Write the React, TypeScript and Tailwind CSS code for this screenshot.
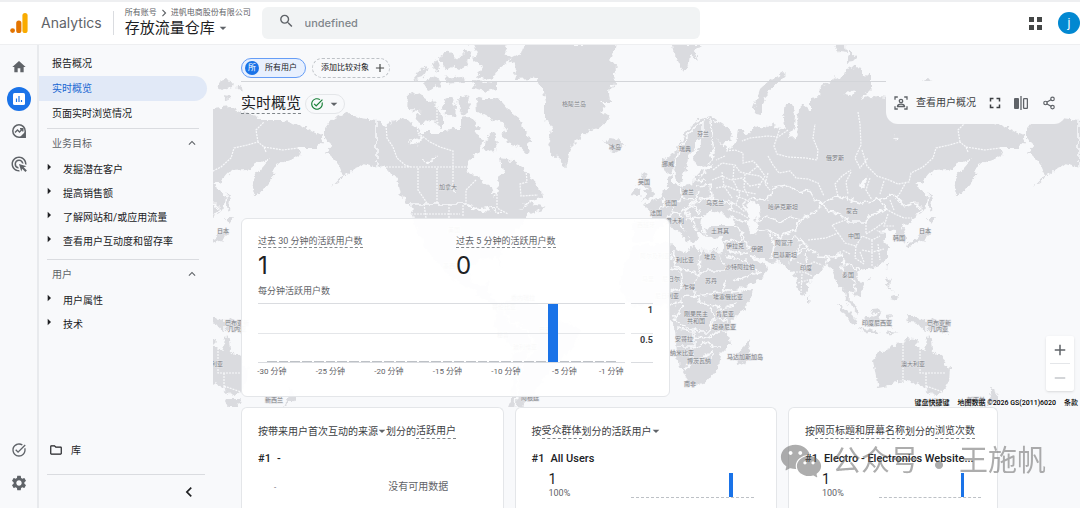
import { ReactNode } from "react"
import { AiFillWechat } from "react-icons/ai"
import {
  MdAdd, MdAdsClick, MdArrowDropDown, MdArrowRight, MdChevronLeft, MdChevronRight, MdFullscreen,
  MdHome, MdKeyboardArrowUp, MdOutlineFolder, MdRemove, MdSearch, MdSettings, MdTaskAlt,
} from "react-icons/md"
import { Share2 } from "lucide-react"

// one turn of the globe on the map, in px
const WORLD = 702

const LAND = [
  // north + south america
  "M325 130L335 118 347 113 360 118 377 120 387 125 403 118 413 125 423 132 443 132 456 128 470 127 477 137 483 141 478 152 468 161 467 172 480 179 492 187 494 197 498 191 497 181 503 172 500 159 513 161 523 167 528 174 535 184 542 191 543 197 530 201 518 211 530 203 546 208 538 211 528 215 520 226 508 240 500 258 503 268 496 258 480 260 470 268 473 282 484 285 490 280 488 292 500 304 512 298 540 304 555 318 582 330 570 352 556 364 545 378 538 386 534 394 526 402 520 410 508 410 512 390 513 370 512 350 494 326 498 308 480 296 462 284 448 276 430 254 415 228 410 204 400 194 397 181 390 171 377 167 363 163 353 170 332 187 343 175 338 163 327 152 333 145 325 140Z",
  // greenland
  "M525 44L522 53 510 59 515 68 513 73 517 79 531 78 537 81 543 92 545 101 545 121 552 126 548 141 551 151 557 159 567 167 569 153 572 146 580 138 588 131 599 128 607 122 609 117 600 111 606 107 600 101 610 101 609 92 614 84 613 76 617 68 611 61 614 50 615 44Z",
  // arctic islands
  "M477 97L484 99 493 99 500 100 510 111 519 118 530 139 528 154 519 146 507 143 504 134 508 129 502 122 494 121 485 116 478 112Z",
  "M409 94L416 92 425 98 431 101 437 107 443 116 443 127 432 122 422 124 414 120 421 112 408 111Z",
  "M444 100L452 96 456 106 455 118 447 116 442 108Z",
  "M457 98L466 96 471 103 467 115 459 111Z",
  "M470 44L508 44 505 54 512 58 500 67 498 74 487 80 478 77 483 68 473 60 478 52Z",
  "M472 80L486 81 496 82 496 90 486 92 474 89Z",
  "M440 57L448 51 455 58 464 55 468 66 460 70 453 66 446 70Z",
  "M413 78L420 70 428 67 422 78 416 80Z",
  "M432 62L439 60 441 68 434 71ZM424 84L430 75 442 79 440 86 428 90ZM444 78L462 76 464 82 447 84ZM465 51L472 52 470 61 464 60Z",
  "M486 139L493 134 499 142 495 150 484 152ZM503 133L509 136 505 140 501 137ZM460 118L470 117 480 128 472 134 460 127Z",
  // iceland, britain, ireland
  "M605 142L610 139 619 140 624 144 623 149 616 153 610 150Z",
  "M643 173L647 174 645 179 649 184 651 190 655 193 653 198 642 200 646 195 643 191 647 188 641 180Z",
  "M633 190L639 187 640 194 636 197 631 196Z",
  // svalbard, novaya zemlya, severnaya zemlya, new siberian islands
  "M673 45L702 45 694 50 698 60 691 55 690 64 684 74 678 62 675 55Z",
  "M753 110L758 97 761 88 770 80 783 72 786 75 778 83 770 88 766 97 762 104 762 115 756 114Z",
  "M835 45L846 45 847 53 838 52ZM849 50L857 57 853 61 846 62Z",
  "M919 82L926 80 934 81 933 87 924 90 920 88ZM937 85L944 87 945 91 939 88ZM926 96L932 97 930 101Z",
  // eurasia
  "M662 160L668 158 676 150 681 141 685 133 692 125 701 118 711 116 717 121 727 127 732 133 729 141 722 143 716 137 724 147 729 151 735 142 737 137 738 129 745 129 743 136 753 130 761 126 767 127 773 122 777 128 785 130 783 118 785 103 792 103 795 115 794 128 788 138 795 137 797 128 799 110 803 105 810 110 810 98 820 97 821 88 832 80 844 75 850 66 860 68 862 74 872 75 872 88 860 100 872 96 886 98 900 102 916 108 932 106 945 113 959 115 963 120 985 120 998 124 1012 130 1023 135 1026 142 1019 148 1000 148 1003 155 990 160 977 165 976 175 966 188 959 198 954 190 956 178 963 168 972 158 958 164 950 170 933 171 926 179 915 185 922 190 927 196 926 206 920 215 911 221 902 227 907 237 905 243 899 240 896 230 886 229 877 232 887 233 883 239 889 248 888 256 883 263 873 268 862 270 857 274 860 280 864 290 858 297 852 291 848 290 850 301 857 307 859 315 852 309 846 298 844 288 839 286 834 276 830 266 823 267 815 276 808 284 808 291 803 298 798 288 794 275 786 268 782 262 770 263 757 257 747 252 753 259 761 262 768 268 761 279 744 287 737 290 731 279 720 255 722 248 723 237 708 238 703 233 704 228 716 226 737 226 730 217 720 213 715 210 710 212 703 217 701 226 703 231 697 231 698 239 693 243 687 233 681 224 676 221 684 230 691 234 687 241 683 236 675 230 669 223 663 226 657 230 652 241 634 243 632 222 650 220 650 210 643 205 651 202 658 198 663 192 668 188 667 178 673 175 673 184 681 187 692 184 694 175 702 171 712 168 714 164 704 167 695 164 694 155 700 146 702 140 696 139 696 148 689 155 687 165 684 177 680 184 677 182 675 168 668 174 663 169Z",
  // africa
  "M633 247L655 243 670 243 678 250 686 253 690 247 703 250 718 249 722 262 731 278 738 291 753 290 750 300 740 313 730 322 728 331 731 344 721 354 719 366 708 381 693 386 687 380 680 366 677 351 675 331 670 316 666 306 650 305 632 306 620 290 620 276 627 258Z",
  "M748 340L750 348 744 363 738 365 737 355 743 347Z",
  // australia, tasmania, new zealand
  "M873 360L880 352 892 348 897 342 904 343 908 337 918 339 917 346 924 351 927 344 928 336 932 341 933 350 942 357 950 368 949 382 943 392 937 396 930 393 924 388 919 382 915 385 909 380 898 381 889 386 878 388 876 376Z",
  "M926 399L943 399 938 407 930 407ZM989 387L994 391 999 395 994 402 986 407 991 397Z",
  // south east asia
  "M838 304L845 308 857 320 858 325 852 323 843 314Z",
  "M863 318L870 314 877 306 883 310 879 318 877 326 866 326ZM858 328L872 330 880 333 868 333ZM885 331L898 333 886 335Z",
  "M886 316L894 315 888 319 892 328 886 322ZM907 316L914 316 921 320 930 319 940 323 950 334 940 330 931 330 925 332 918 324 910 323Z",
  "M886 278L890 280 889 287 894 292 888 289ZM892 296L898 294 897 301 890 299ZM886 264L889 264 887 269ZM867 277L871 276 869 280Z",
  "M929 192L932 198 931 212 928 207ZM927 218L936 218 931 224ZM926 227L930 234 924 240 913 245 906 248 907 243 918 238ZM808 295L811 300 808 303Z",
].join("")

const BORDERS = [
  "M377 120L377 167 384 169 392 178",
  "M411 204L466 204 480 210 490 207 500 214",
  // scandinavia and europe
  "M669 174L677 160 679 147 688 136 695 126 703 122 710 118M703 122L703 138M711 120L712 138 714 152 708 164",
  "M663 195L664 206 659 211M680 188L682 198 675 203 665 206M682 198L696 200 698 192M694 175L703 177 706 170M693 181L706 180M698 186L711 184 712 197 699 198M690 204L705 198 722 201 733 204 728 210M675 203L671 212 680 213 692 205 700 213M680 213L684 220 693 217 702 218M693 217L696 230M669 218L672 211M650 219L658 221M686 210L690 222",
  "M703 228L709 237M737 226L742 232 739 240 724 241M729 240L727 250 738 254 748 252M742 232L746 243 752 251M730 217L743 223 749 222",
  // central asia
  "M747 212L743 205 750 198 766 200 775 187 786 185 799 192 808 190 815 199 822 203 815 212 801 220 790 217 781 223 768 216 759 222 753 214",
  "M757 231L768 229 780 239 786 234 796 229 801 220M768 229L774 243 772 260M774 246L787 243 796 236 802 243M802 243L795 254 789 263M790 258L800 252 808 245",
  "M822 203L838 196 850 200 862 203 880 199 886 209 872 215 864 222 850 222 838 214 828 210 822 203M880 199L895 195 905 206 915 203 922 210 917 216",
  "M801 240L808 247 818 256 832 257 842 254 844 263 842 274M828 257L826 266M842 262L852 266 859 272M846 275L856 283 853 292M808 250L805 260",
  "M726 255L745 261 757 271M733 281L748 276 760 272",
  // africa
  "M670 262L672 255M675 250L674 266 699 275 700 250M699 251L722 251M699 271L727 271M699 275L694 287 696 296 712 294 722 291 727 279M670 268L681 270 683 284 678 292 670 289M683 297L695 295 704 304 715 305 723 309 738 303M671 305L683 300M684 305L675 318 681 325 692 328 700 332 709 332 714 318 711 308M677 329L694 331 694 346 677 346M694 337L708 338 720 331 730 333M694 348L708 342 714 347 719 347M692 346L692 362 684 371M692 362L701 358 712 352 712 360M720 309L726 320 712 319M722 287L733 292 747 290",
  // islands
  "M927 318L927 331M866 316L875 313 882 311",
  // south america
  "M500 304L510 322 528 330 534 350 524 362 518 380 516 408M512 350L524 352",
].join("")

const PROVINCES = [
  "M386 125L387 138 393 147 397 158 405 165 411 167M377 167L468 167M417 124L418 133 430 142 440 147 453 151 453 167M418 168L418 190 427 203M437 168L437 203M453 168L453 188M476 180L466 190 466 204M497 194L497 208 508 214M526 170L527 182 520 184 521 196 538 195M424 204L426 218M449 204L449 218M463 205L463 216M411 214L460 214M437 104L437 121 424 121",
  // russia
  "M788 130L778 137 768 136 750 138 742 141M780 128L774 146 777 154 788 157 806 158 817 160 818 150 813 138 815 124M768 156L773 165 779 173 790 171 796 178 808 179 818 183 824 196M858 112L860 124 861 145 855 158 860 168 868 158M838 196L835 184 842 176 851 170M862 150L867 166 877 176 889 180 898 184 909 182 911 173 923 167 933 158 936 148 949 145 960 142 966 147 968 152M966 147L985 150 1000 148M960 142L958 130 966 122M906 182L900 193 897 197",
  "M726 151L735 150 743 153 743 163 753 161 758 166 748 174M713 170L722 163 735 165 740 172 748 174 760 176 768 184M712 180L722 176 731 180 742 178 750 186 760 184M716 188L727 186 736 190 746 192 756 194M722 172L724 186 732 198M734 166L733 180 740 194 736 204M745 174L744 188 748 196M758 166L765 176 758 188M728 200L738 206 745 212M730 210L740 213 748 218M736 196L747 200M768 173L765 184 770 190M725 156L716 160M851 172L846 182 848 194M870 178L866 190 872 200M884 181L880 194",
  // china
  "M808 240L826 238 838 233 832 225 848 219M838 233L845 243 856 246 862 236 872 240 880 236M856 246L855 258 864 264M866 222L866 234 876 228 884 222M862 250L872 252 884 249M872 240L872 266M878 244L880 260M850 254L842 250M886 209L895 214 904 218 912 218M890 200L894 210M864 262L860 252M888 214L884 226 894 226",
  // india
  "M797 262L806 266 814 262 822 265M793 272L804 272 812 276M798 283L808 280M806 258L808 274M802 274L801 293",
  // australia
  "M903 343L903 380M920 348L920 373 946 373M926 373L926 390M926 386L943 392",
].join("")

const LAKES =
  "M410 142l9-4 1-3 2 4-5 5 -5 1ZM422 160l8 1 8-6-5 6 -6 3ZM450 185l3 4 3 4-3-1ZM848 90l3 2 4-1-3 4-1 4-2-4-4-1ZM862 189q6-8 5-14-6 6-7 12ZM893 135l6 5-3 0ZM474 206l10 2 8 4-10-1ZM716 310l4 1-1 4-3-1ZM706 352l3 3-3 3-2-3ZM745 208l5-8 8 5 2 10-6 4 5 5-2 8-7 1-3-10 3-4Z"

const MAP_LABELS: [number, number, string][] = [
  [574, 106, "格陵兰岛"], [615, 149, "冰岛"], [703, 136, "芬兰"], [685, 151, "瑞典"], [668, 166, "挪威"],
  [644, 184, "英国"], [688, 194, "波兰"], [671, 205, "德国"], [715, 205, "乌克兰"], [656, 215, "法国"],
  [675, 223, "意大利"], [646, 227, "西班牙"], [720, 233, "土耳其"], [735, 248, "伊拉克"], [757, 251, "伊朗"],
  [784, 245, "阿富汗"], [785, 257, "巴基斯坦"], [783, 209, "哈萨克斯坦"], [852, 213, "蒙古"], [854, 238, "中国"],
  [835, 160, "俄罗斯"], [925, 233, "日本"], [899, 240, "韩国"], [806, 270, "印度"], [848, 277, "泰国"],
  [740, 269, "沙特阿拉伯"], [710, 259, "埃及"], [685, 262, "利比亚"], [711, 283, "苏丹"], [689, 289, "乍得"],
  [655, 258, "阿尔及利亚"], [648, 281, "马里"], [671, 281, "尼日尔"], [667, 298, "尼日利亚"], [728, 299, "埃塞俄比亚"],
  [696, 316, "刚果民主"], [696, 323, "共和国"], [725, 316, "肯尼亚"], [724, 329, "坦桑尼亚"], [684, 341, "安哥拉"],
  [682, 355, "纳米比亚"], [699, 363, "博茨瓦纳"], [690, 386, "南非"], [745, 359, "马达加斯加岛"],
  [877, 325, "印度尼西亚"], [939, 325, "巴布亚新"], [939, 331, "几内亚"], [913, 366, "澳大利亚"], [976, 402, "新西兰"],
  [448, 189, "加拿大"], [454, 232, "美国"], [452, 268, "墨西哥"], [523, 300, "委内瑞拉"], [504, 309, "哥伦比亚"],
  [545, 332, "巴西"], [503, 337, "秘鲁"], [525, 349, "玻利维亚"], [530, 400, "阿根廷"],
]

function WorldMap() {
  return (
    <svg className="absolute inset-x-0 top-0 w-full h-[362px]" aria-hidden="true">
      <defs>
        <filter id="coast" x="-5%" y="-5%" width="110%" height="110%">
          <feTurbulence type="fractalNoise" baseFrequency="0.16" numOctaves="3" seed="4" />
          <feDisplacementMap in="SourceGraphic" scale="8" xChannelSelector="R" yChannelSelector="G" />
        </filter>
        <g id="world">
          <g filter="url(#coast)">
            <path d={LAND} fill="#dadbdf" />
            <path d={LAKES} fill="#f8f9fb" />
            <path d={BORDERS} fill="none" stroke="#f8f9fb" strokeWidth="1.5" />
          </g>
          <path d={PROVINCES} fill="none" stroke="#f8f9fb" strokeWidth="1.2" strokeDasharray="2 1" />
          {MAP_LABELS.map(([x, y, name], i) => (
            <text key={i} x={x} y={y} textAnchor="middle" fill="#7d8086" stroke="#e4e5e8" strokeWidth="1" paintOrder="stroke" className="text-[6px]">{name}</text>
          ))}
        </g>
      </defs>
      <g transform="translate(-213 -45)">
        <use href="#world" />
        <use href="#world" x={-WORLD} />
        <use href="#world" x={WORLD} />
      </g>
    </svg>
  )
}

function Logo() {
  return (
    <svg width="18" height="22" viewBox="0 0 18 22" aria-hidden="true">
      <rect x="12.400" y="1" width="5.200" height="20" rx="2.600" fill="#f9ab00" />
      <rect x="6.200" y="8.500" width="5.200" height="12.500" rx="2.600" fill="#e37400" />
      <circle cx="2.600" cy="18.600" r="2.400" fill="#e37400" />
    </svg>
  )
}

function ReportsIcon() {
  return (
    <svg width="14" height="14" viewBox="0 0 14 14" aria-hidden="true">
      <rect x="1" y="1" width="12" height="12" rx="1.500" fill="#fff" />
      <path d="M4.500 6.500v3.500M7 4v6M9.500 8v2" stroke="#1a73e8" strokeWidth="1.200" />
    </svg>
  )
}

function ExploreIcon() {
  return (
    <svg width="16" height="16" viewBox="0 0 16 16" fill="none" stroke="#5f6368" strokeWidth="1.500" aria-hidden="true">
      <path d="M14.200 14.200H8A6.200 6.200 0 1 1 14.200 8Z" />
      <path d="M13.500 10.500v3.200h-3.200Z" fill="#5f6368" />
      <path d="M4 9.500l2.500-2.500 2 2L11.500 6M9 5.700h2.800v2.800" strokeWidth="1.400" />
    </svg>
  )
}

function SnapshotIcon() {
  return (
    <svg width="14" height="14" viewBox="0 0 14 14" fill="none" stroke="#5f6368" strokeWidth="1.300" aria-hidden="true">
      <path d="M1 3.800V1h2.800M10.200 1H13v2.800M13 10.200V13h-2.800M3.800 13H1v-2.800" />
      <circle cx="7" cy="5" r="1.700" />
      <path d="M3.500 10.500c0-1.800 2-2.400 3.500-2.400s3.500.6 3.500 2.400Z" />
    </svg>
  )
}

function CompareIcon() {
  return (
    <svg width="14" height="14" viewBox="0 0 14 14" aria-hidden="true">
      <rect x="0" y="2" width="5" height="11" rx="1" fill="#5f6368" />
      <path d="M7 0v14" stroke="#5f6368" strokeWidth="1.300" />
      <rect x="9.600" y="2.600" width="3.800" height="9.800" rx=".6" fill="none" stroke="#5f6368" strokeWidth="1.300" />
    </svg>
  )
}

function TreeItem({ children }: { children: ReactNode }) {
  return (
    <li>
      <a href="#" className="flex h-6 items-center text-[#202124]">
        <MdArrowRight className="size-4 -mt-1 mx-0.5" />
        <span className="ml-1">{children}</span>
      </a>
    </li>
  )
}

function Section({ title, children }: { title: string, children: ReactNode }) {
  return (
    <div className="ml-2 mr-2 border-t border-[#dadce0]">
      <button className="flex h-7 w-full items-center justify-between pl-[5px] text-[#5f6368]">
        {title}
        <MdKeyboardArrowUp className="size-3.5" />
      </button>
      <ul className="-ml-2">{children}</ul>
    </div>
  )
}

function Spark({ bar }: { bar: string }) {
  return (
    <div className="relative h-[25px] border-b border-dashed border-[#bdc1c6]">
      <div className={`absolute bottom-0 h-full bg-[#1a73e8] ${bar}`} />
    </div>
  )
}

function Panel({ title, name, children }: { title: ReactNode, name: string, children: ReactNode }) {
  return (
    <section className="rounded-t-md border border-b-0 border-[#e4e6e9] bg-white px-4 pt-[15px] h-[110px] min-w-0">
      <h2 className="flex h-4 items-center whitespace-nowrap text-[10px] text-[#3c4043]">{title}</h2>
      <p className="mt-3 flex h-4 items-center gap-1.5 whitespace-nowrap text-[11px] font-medium text-[#202124]">
        <span>#1</span><span>{name}</span>
      </p>
      {children}
    </section>
  )
}

const dashed = "border-b border-dashed border-[#80868b]"
const minutes = Array.from({ length: 30 }, (_, i) => 30 - i)

export default function App() {
  return (
    <div className="relative flex h-screen flex-col overflow-hidden bg-[#f8f9fb] font-['Roboto','Noto_Sans_CJK_SC',sans-serif] text-[10px] text-[#202124]">
      <header className="flex h-[45px] shrink-0 items-center border-y border-t-2 border-[#eeeff1] bg-white">
        <a href="#" className="flex items-center pl-2.5 text-[#5f6368]">
          <Logo />
          <span className="ml-[13px] font-['Inter',sans-serif] text-sm">Analytics</span>
        </a>
        <div className="ml-[11px] h-6 w-px bg-[#dadce0]" />
        <div className="ml-[11px] w-[137px]">
          <p className="flex h-2.5 items-center whitespace-nowrap text-[8px] text-[#5f6368]">
            所有账号<MdChevronRight className="size-3.5" />进帆电商股份有限公司
          </p>
          <button className="flex h-5 items-center whitespace-nowrap text-[15px] text-[#202124]">
            存放流量仓库<MdArrowDropDown className="size-4 text-[#5f6368]" />
          </button>
        </div>
        <label className="flex h-8 w-[438px] items-center rounded-md bg-[#f1f3f4] pl-4">
          <MdSearch className="size-[18px] -mt-1 text-[#5f6368]" />
          <input className="ml-2.5 w-full bg-transparent font-['Inter',sans-serif] text-[11px] font-medium text-[#80868b] outline-none" defaultValue="undefined" aria-label="搜索" />
        </label>
        <button className="ml-auto grid grid-cols-2 gap-[3px]" aria-label="应用">
          {[0, 1, 2, 3].map((i) => <span key={i} className="size-[5px] bg-[#444746]" />)}
        </button>
        <button className="ml-4 grid size-[22px] place-items-center rounded-full bg-[#0288d1] text-xs text-white">j</button>
      </header>

      <div className="flex min-h-0 flex-1">
        <nav className="flex w-[39px] shrink-0 flex-col items-center border-r-2 border-[#e8eaed] pt-3.5 text-[#5f6368]">
          <a href="#" aria-label="首页"><MdHome className="size-4" /></a>
          <a href="#" aria-label="报告" className="mt-3 grid size-6 place-items-center rounded-full bg-[#1a73e8]"><ReportsIcon /></a>
          <a href="#" aria-label="探索" className="mt-3"><ExploreIcon /></a>
          <a href="#" aria-label="广告" className="mt-4"><MdAdsClick className="size-[18px]" /></a>
          <a href="#" aria-label="任务" className="mt-auto"><MdTaskAlt className="size-4" /></a>
          <a href="#" aria-label="管理" className="mt-4 mb-4"><MdSettings className="size-[18px]" /></a>
        </nav>

        <aside className="flex w-[174px] shrink-0 flex-col pt-1.5">
          <ul className="mb-0.5">
            <li><a href="#" className="flex h-[25px] items-center pl-[13px]">报告概况</a></li>
            <li><a href="#" className="mr-1.5 flex h-[25px] items-center rounded-r-full bg-[#e1e9f7] pl-[13px] text-[#1967d2]">实时概览</a></li>
            <li><a href="#" className="flex h-[25px] items-center pl-[13px]">页面实时浏览情况</a></li>
          </ul>
          <div className="flex flex-col gap-1.5 pr-1.5">
            <Section title="业务目标">
              <TreeItem>发掘潜在客户</TreeItem>
              <TreeItem>提高销售额</TreeItem>
              <TreeItem>了解网站和/或应用流量</TreeItem>
              <TreeItem>查看用户互动度和留存率</TreeItem>
            </Section>
            <Section title="用户">
              <TreeItem>用户属性</TreeItem>
              <TreeItem>技术</TreeItem>
            </Section>
          </div>
          <a href="#" className="mt-auto flex h-8 items-center gap-2 pl-2.5">
            <MdOutlineFolder className="size-3.5" />库
          </a>
          <div className="ml-2 mr-2 mt-2 flex h-[34px] justify-end border-t border-[#dadce0] pr-1.5">
            <button aria-label="收起"><MdChevronLeft className="size-5" /></button>
          </div>
        </aside>

        <main className="relative min-w-0 flex-1">
          <WorldMap />
          <div className="relative flex h-full flex-col pl-7">
            <div className="mr-3.5 flex h-[37px] shrink-0 items-end gap-1.5 border-b border-[#d3d5d9] pb-[3px]">
              <button className="flex h-5 items-center gap-1.5 rounded-full border border-[#669df6] bg-[#e8f0fe] pl-[3px] pr-2 text-[8px]">
                <span className="grid size-3.5 place-items-center rounded-full bg-[#1a73e8] text-white">所</span>
                所有用户
              </button>
              <button className="flex h-5 items-center gap-1 rounded-full border border-dashed border-[#bdc1c6] bg-[#f8f9fb] pl-2 pr-0.5 text-[8px]">
                添加比较对象<MdAdd className="size-3.5 text-[#444746]" />
              </button>
            </div>

            <div className="flex shrink-0 items-start">
              <h1 className={`mt-3 flex h-5 items-center text-[15px] ${dashed}`}>实时概览</h1>
              <button className="ml-1 mt-3 flex h-5 items-center gap-0.5 rounded-full border border-[#e4e6e9] bg-[#f8f9fb] pl-1 pr-0.5" aria-label="状态">
                <MdTaskAlt className="size-3.5 text-[#188038]" />
                <MdArrowDropDown className="size-4 text-[#5f6368]" />
              </button>
              <div className="-mt-px mr-3.5 ml-auto flex h-[43px] w-[180px] items-center rounded-b-xl bg-[#f8f9fb] pl-2 text-[#3c4043]">
                <SnapshotIcon />
                <a href="#" className="ml-2">查看用户概况</a>
                <button className="ml-2.5" aria-label="全屏"><MdFullscreen className="size-[18px]" /></button>
                <button className="ml-2.5" aria-label="比较"><CompareIcon /></button>
                <button className="ml-3.5" aria-label="分享"><Share2 className="size-3.5 text-[#5f6368]" /></button>
              </div>
            </div>

            <section className="mt-[94px] h-[179px] w-[429px] shrink-0 rounded-md border border-[#e4e6e9] bg-white/95 p-4 text-[9px] text-[#5f6368]">
              <div className="flex">
                <div className="w-[198px]">
                  <p className="h-4"><span className={`pb-px ${dashed}`}>过去 30 分钟的活跃用户数</span></p>
                  <p className="font-['Inter',sans-serif] text-2xl leading-[30px] text-[#202124]">1</p>
                </div>
                <div>
                  <p className="h-4"><span className={`pb-px ${dashed}`}>过去 5 分钟的活跃用户数</span></p>
                  <p className="font-['Inter',sans-serif] text-2xl leading-[30px] text-[#202124]">0</p>
                </div>
              </div>
              <p className="mt-0.5 h-4 leading-4">每分钟活跃用户数</p>
              <div className="mt-1 flex gap-1.5">
                <div className="relative flex h-[60px] flex-1 border-y border-[#dadce0] px-2">
                  <div className="absolute inset-x-0 top-1/2 border-t border-[#e4e6e9]" />
                  {minutes.map((m) => (
                    <div key={m} className="relative flex min-w-0 flex-1 flex-col items-center justify-end px-px">
                      {m === 6 ? <div className="h-full w-full bg-[#1a73e8]" /> : <div className="h-px w-full bg-[#bdc1c6]" />}
                      {(m % 5 === 0 || m === 1) && (
                        <span className="absolute top-full mt-1 whitespace-nowrap text-[8px]">-{m} 分钟</span>
                      )}
                    </div>
                  ))}
                </div>
                <div className="flex h-[60px] w-[22px] flex-col border-b border-[#dadce0] text-right font-bold leading-3 text-[#3c4043]">
                  <span className="h-[30px] border-t border-[#dadce0]">1</span>
                  <span className="h-[29px] border-t border-[#e4e6e9]">0.5</span>
                </div>
              </div>
            </section>

            <div className="mt-2.5 mr-[82px] grid shrink-0 grid-cols-[5fr_5fr_4fr] gap-[11px]">
              <Panel name="-" title={<>按带来用户首次互动的来源<MdArrowDropDown className="-mx-1 size-4 text-[#5f6368]" />划分的<span className={dashed}>活跃用户</span></>}>
                <div className="mt-3 flex items-end gap-28 pl-4 text-[#5f6368]">
                  <span className="text-[8px]">-</span>
                  <span>没有可用数据</span>
                </div>
              </Panel>
              <Panel name="All Users" title={<>按<span className={dashed}>受众群体</span>划分的活跃用户<MdArrowDropDown className="-ml-1 size-4 text-[#5f6368]" /></>}>
                <div className="flex justify-between pl-[17px]">
                  <div>
                    <p className="mt-1 text-sm leading-4">1</p>
                    <p className="text-[9px] leading-3 text-[#5f6368]">100%</p>
                  </div>
                  <div className="mt-1.5 mr-1.5 w-[123px]"><Spark bar="right-[21px] w-1" /></div>
                </div>
              </Panel>
              <Panel name="Electro - Electronics Website..." title={<>按<span className={dashed}>网页标题和屏幕名称</span>划分的<span className={dashed}>浏览次数</span></>}>
                <div className="flex justify-between pl-[17px]">
                  <div>
                    <p className="mt-1 text-sm leading-4">1</p>
                    <p className="text-[9px] leading-3 text-[#5f6368]">100%</p>
                  </div>
                  <div className="mt-1.5 w-[102px]"><Spark bar="right-[17px] w-[3px]" /></div>
                </div>
              </Panel>
            </div>
          </div>

          {/* map controls */}
          <div className="absolute right-1.5 top-[291px] flex w-7 flex-col items-center rounded-xs bg-white text-[#5f6368] shadow">
            <button className="grid h-[27px] place-items-center" aria-label="放大"><MdAdd className="size-[18px]" /></button>
            <div className="h-px w-5 bg-[#e4e6e9]" />
            <button className="grid h-[27px] place-items-center text-[#c4c7cb]" aria-label="缩小"><MdRemove className="size-[18px]" /></button>
          </div>
          <div className="absolute right-0.5 top-[353px] flex gap-2 text-[7px] leading-2.5 font-medium text-black">
            <button>键盘快捷键</button>
            <span>地图数据 ©2026 GS(2011)6020</span>
            <a href="#">条款</a>
          </div>
        </main>
      </div>

      <div className="pointer-events-none absolute right-[34px] bottom-6 flex items-center text-[29px] leading-10 text-[#6b6b6b] opacity-55">
        <AiFillWechat className="mr-2 size-[46px]" />
        <span>公众号</span>
        <span className="w-10 pt-1 text-center font-['Noto_Sans_CJK_SC',sans-serif] font-black">·</span>
        <span>王施帆</span>
      </div>
    </div>
  )
}
